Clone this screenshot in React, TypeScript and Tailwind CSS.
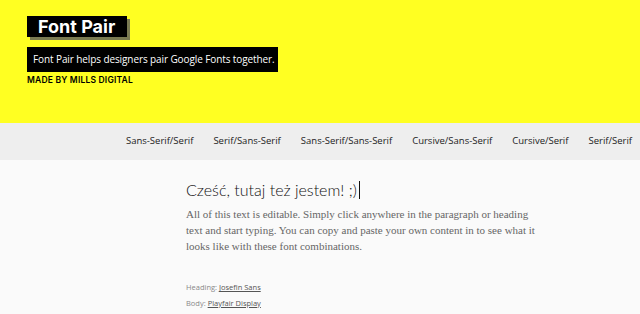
import React from "react";

const pairs = [
  "Sans-Serif/Serif",
  "Serif/Sans-Serif",
  "Sans-Serif/Sans-Serif",
  "Cursive/Sans-Serif",
  "Cursive/Serif",
  "Serif/Serif",
];

const App = () => {
  return (
    <div className="w-[640px] h-[314px] overflow-hidden bg-[#fafafa] font-['Open_Sans',sans-serif]">
      {/* Yellow header with logo block */}
      <header className="h-[123px] bg-[#ffff22] pt-[16px] pl-[27px]">
        <div className="flex h-[21px] w-[100px] items-center bg-black pl-[11px] shadow-[3px_3px_0_#7a7a52]">
          <span className="font-['Inter',sans-serif] text-[18px] font-bold leading-none text-white">
            Font Pair
          </span>
        </div>
        <div className="mt-[10px] flex h-[25px] w-[251px] items-center whitespace-nowrap bg-black pl-[6px] text-[10px] tracking-[-0.1px] text-white">
          Font Pair helps designers pair Google Fonts together.
        </div>
        <p className="mt-[4px] font-['Inter',sans-serif] text-[8.5px] font-semibold leading-none tracking-[0.2px] text-black">
          MADE BY MILLS DIGITAL
        </p>
      </header>

      {/* Category nav */}
      <nav className="flex h-[37px] items-center justify-end gap-[20px] bg-[#eeeeee] pr-[8px] text-[9.5px] text-[#222]">
        {pairs.map((p) => (
          <a key={p} className="whitespace-nowrap">
            {p}
          </a>
        ))}
      </nav>

      {/* Editable sample */}
      <main className="pl-[186px] pt-[18px]">
        <h1 className="flex items-center font-['Lato',sans-serif] text-[16px] font-light leading-[24px] text-[#111]">
          Cześć, tutaj też jestem! ;)
          <span className="ml-[2px] inline-block h-[18px] w-px bg-[#111]" />
        </h1>
        <p className="mt-[4px] w-[352px] font-['Liberation_Serif',serif] text-[11px] leading-[16px] text-[#666]">
          All of this text is editable. Simply click anywhere in the paragraph or heading
          text and start typing. You can copy and paste your own content in to see what it
          looks like with these font combinations.
        </p>
        <div className="mt-[30px] text-[7.5px] leading-none text-[#888]">
          <p>
            Heading: <a className="text-[#555] underline">Josefin Sans</a>
          </p>
          <p className="mt-[8px]">
            Body: <a className="text-[#555] underline">Playfair Display</a>
          </p>
        </div>
      </main>
    </div>
  );
};

export default App;
